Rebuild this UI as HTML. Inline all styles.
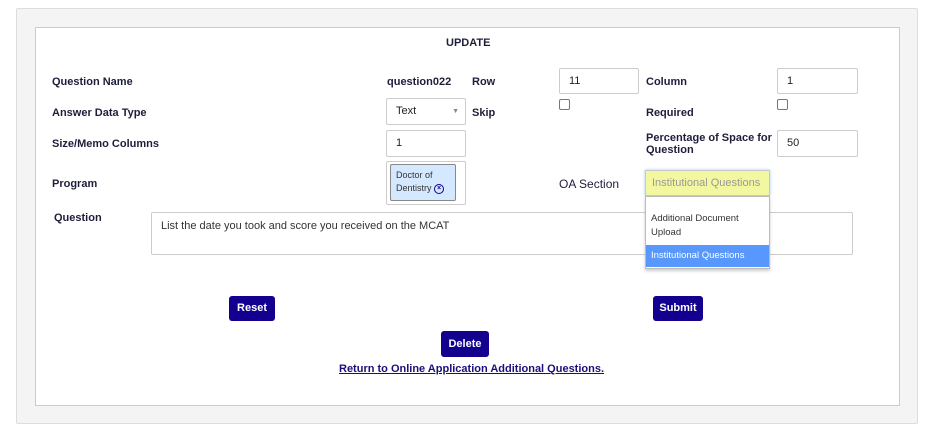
<!DOCTYPE html><html><head><style>
body{margin:0;width:936px;height:435px;background:#fff;font-family:"Liberation Sans",Arial,sans-serif;font-size:11px;color:#222;position:relative;overflow:hidden}
.a{position:absolute}
.lb{position:absolute;font-weight:bold;color:#1e1e3a}
.in{position:absolute;border:1px solid #ccc;border-radius:2px;background:#fff;box-sizing:border-box;padding-left:9px;font-size:11px;color:#222}
.btn{position:absolute;background:#14008f;color:#fff;font-weight:bold;border-radius:3px;text-align:center;font-size:11px}
.cb{position:absolute;width:9px;height:9px;border:1px solid #777;border-radius:2px;background:#fff}
</style></head><body>
<div class="a" style="left:16px;top:8px;width:900px;height:414px;background:#f4f4f4;border:1px solid #ddd;border-radius:2px"></div>
<div class="a" style="left:35px;top:27px;width:863px;height:377px;background:#fff;border:1px solid #ccc"></div>
<div class="lb" style="left:446px;top:37px">UPDATE</div>
<div class="lb" style="left:52px;top:76px">Question Name</div>
<div class="lb" style="left:387px;top:76px">question022</div>
<div class="lb" style="left:472px;top:76px">Row</div>
<div class="in" style="left:559px;top:68px;width:80px;height:26px;line-height:24px">11</div>
<div class="lb" style="left:646px;top:76px">Column</div>
<div class="in" style="left:777px;top:68px;width:81px;height:26px;line-height:24px">1</div>
<div class="lb" style="left:52px;top:107px">Answer Data Type</div>
<div class="in" style="left:386px;top:98px;width:80px;height:27px;line-height:25px">Text<span style="position:absolute;right:6px;top:0;font-size:7px;color:#888">&#9660;</span></div>
<div class="lb" style="left:472px;top:107px">Skip</div>
<div class="cb" style="left:559px;top:99px"></div>
<div class="lb" style="left:646px;top:107px">Required</div>
<div class="cb" style="left:777px;top:99px"></div>
<div class="lb" style="left:52px;top:138px">Size/Memo Columns</div>
<div class="in" style="left:386px;top:130px;width:80px;height:27px;line-height:25px">1</div>
<div class="lb" style="left:646px;top:132px;line-height:12px">Percentage of Space for<br>Question</div>
<div class="in" style="left:777px;top:130px;width:81px;height:27px;line-height:25px">50</div>
<div class="lb" style="left:52px;top:178px">Program</div>
<div class="in" style="left:386px;top:161px;width:80px;height:44px;padding:0"></div>
<div class="a" style="left:390px;top:164px;width:66px;height:37px;background:#d4e8ff;border:1px solid #888;border-radius:2px;box-sizing:border-box;padding:4px 0 0 5px;font-size:9px;line-height:13px;color:#333">Doctor of<br>Dentistry <span style="display:inline-block;width:8px;height:8px;border:1.5px solid #14008f;border-radius:50%;font-size:7px;line-height:8px;text-align:center;color:#14008f;font-weight:bold;vertical-align:middle">×</span></div>
<div class="a" style="left:559px;top:177px;font-size:12px;color:#1e1e3a">OA Section</div>
<div class="a" style="left:645px;top:170px;width:125px;height:26px;background:#f3f7a0;border:1px solid #c8c8c8;box-shadow:0 0 3px #9cf;box-sizing:border-box;padding-left:6px;line-height:24px;color:#999;font-size:11px">Institutional Questions <span style="font-size:6px">&#9650;</span></div>
<div class="a" style="left:54px;top:212px;font-weight:bold;color:#1e1e3a">Question</div>
<div class="in" style="left:151px;top:212px;width:702px;height:43px;padding:6px 9px;line-height:14px;color:#333">List the date you took and score you received on the MCAT</div>
<div class="a" style="left:645px;top:196px;width:125px;height:73px;background:#fff;border:1px solid #bbb;box-shadow:0 2px 3px rgba(0,0,0,.2);box-sizing:border-box;font-size:9.5px;color:#333">
<div style="padding:15px 0 0 5px;line-height:14px">Additional Document<br>Upload</div>
<div style="position:absolute;left:0;right:0;top:48px;height:22px;background:#5897fb;color:#fff;padding-left:5px;line-height:22px">Institutional Questions</div></div>
<div class="btn" style="left:229px;top:296px;width:46px;height:25px;line-height:25px">Reset</div>
<div class="btn" style="left:653px;top:296px;width:50px;height:25px;line-height:25px">Submit</div>
<div class="btn" style="left:441px;top:331px;width:48px;height:26px;line-height:26px">Delete</div>
<div class="a" style="left:339px;top:363px;font-weight:bold;text-decoration:underline;color:#1a0f7a">Return to Online Application Additional Questions.</div>
</body></html>
